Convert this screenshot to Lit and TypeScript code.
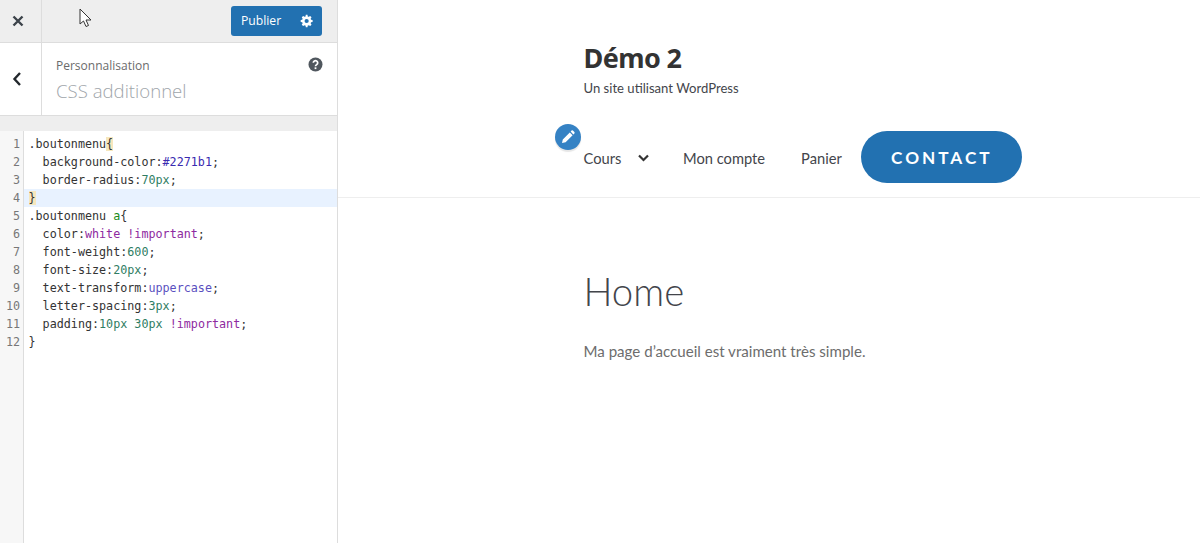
import { LitElement, html, css } from "lit";
import { customElement } from "lit/decorators.js";

const k = (t: string) => html`<span class="kw">${t}</span>`;
const n = (t: string) => html`<span class="num">${t}</span>`;
const h = (t: string) => html`<span class="hex">${t}</span>`;
const v = (t: string) => html`<span class="val">${t}</span>`;
const g = (t: string) => html`<span class="tag">${t}</span>`;
const b = (t: string) => html`<span class="bracket">${t}</span>`;

const LINES = [
  html`.boutonmenu${b("{")}`,
  html`  background-color:${h("#2271b1")};`,
  html`  border-radius:${n("70px")};`,
  html`${b("}")}`,
  html`.boutonmenu ${g("a")}{`,
  html`  color:${k("white")} ${k("!important")};`,
  html`  font-weight:${n("600")};`,
  html`  font-size:${n("20px")};`,
  html`  text-transform:${v("uppercase")};`,
  html`  letter-spacing:${n("3px")};`,
  html`  padding:${n("10px")} ${n("30px")} ${k("!important")};`,
  html`}`,
];

@customElement("app-root")
export class AppRoot extends LitElement {
  static styles = css`
    :host {
      display: flex;
      width: 1200px;
      height: 543px;
      overflow: hidden;
      background: #fff;
      position: relative;
      font-family: "Open Sans", "Noto Sans", sans-serif;
    }
    .side {
      width: 338px;
      flex: none;
      box-sizing: border-box;
      border-right: 1px solid #ddd;
      display: flex;
      flex-direction: column;
      background: #eee;
    }
    .top {
      height: 43px;
      flex: none;
      box-sizing: border-box;
      border-bottom: 1px solid #ddd;
      display: flex;
      align-items: center;
    }
    .close {
      width: 42px;
      height: 42px;
      flex: none;
      box-sizing: border-box;
      border-right: 1px solid #ddd;
      display: flex;
      align-items: center;
      padding-left: 12px;
    }
    .publish {
      margin-left: auto;
      margin-right: 15px;
      margin-top: -1px;
      width: 91px;
      height: 30px;
      background: #2271b1;
      border-radius: 3px;
      display: flex;
      align-items: center;
      color: #fff;
      font-size: 12.2px;
    }
    .publish .label {
      width: 60px;
      text-align: center;
    }
    .publish svg {
      margin-left: 9px;
    }
    .section {
      height: 73px;
      flex: none;
      box-sizing: border-box;
      background: #fff;
      border-bottom: 1px solid #ddd;
      display: flex;
    }
    .back {
      width: 42px;
      flex: none;
      box-sizing: border-box;
      border-right: 1px solid #ddd;
      display: flex;
      align-items: center;
      padding-left: 12px;
    }
    .titles {
      flex: 1;
      padding: 14px 0 0 14px;
      position: relative;
    }
    .crumb {
      font-size: 12px;
      line-height: 18px;
      color: #6b6b6b;
    }
    .title {
      font-size: 18.6px;
      line-height: 26px;
      margin-top: 3px;
      color: #a0a5aa;
      font-weight: 300;
    }
    .help {
      position: absolute;
      top: 14px;
      right: 14px;
    }
    .gap {
      height: 15px;
      flex: none;
    }
    .editor {
      flex: 1;
      background: #fff;
      display: flex;
      font-family: "DejaVu Sans Mono", "Liberation Mono", monospace;
      font-size: 11.72px;
      line-height: 18px;
      padding-top: 0;
    }
    .gutter {
      width: 24px;
      flex: none;
      box-sizing: border-box;
      background: #f7f7f7;
      border-right: 1px solid #ddd;
      padding-top: 4px;
      padding-right: 3px;
      text-align: right;
      color: #777;
    }
    .code {
      flex: 1;
      padding-top: 4px;
      color: #333;
    }
    .line {
      height: 18px;
      padding-left: 4.5px;
      white-space: pre;
    }
    .line.active {
      background: #e8f2ff;
    }
    .num { color: #2f7d63; }
    .hex { color: #3a2bb0; }
    .kw { color: #8e2aa0; }
    .val { color: #5a4fc0; }
    .tag { color: #1a8a1a; }
    .bracket { background: #f6e7bd; }

    .main {
      flex: 1;
      display: flex;
      flex-direction: column;
      font-family: "Lato", "Noto Sans", sans-serif;
    }
    .head {
      height: 198px;
      flex: none;
      box-sizing: border-box;
      border-bottom: 1px solid #eee;
      padding: 41px 0 0 245.5px;
      position: relative;
    }
    .brand {
      font-family: "Noto Sans", sans-serif;
      font-size: 27px;
      line-height: 34px;
      font-weight: 700;
      color: #333;
      letter-spacing: -0.6px;
    }
    .tag-line {
      font-size: 13.1px;
      line-height: 18px;
      margin-top: 4px;
      color: #43454b;
    }
    .nav {
      display: flex;
      align-items: center;
      margin-top: 34px;
      font-size: 14.7px;
      color: #43454b;
    }
    .nav .cours,
    .nav .chev,
    .nav .compte,
    .nav .panier {
      margin-top: 2px;
    }
    .nav .cours {
      width: 38px;
    }
    .nav .chev {
      margin-left: 16px;
      display: flex;
    }
    .nav .compte {
      margin-left: 34.5px;
    }
    .nav .panier {
      margin-left: 36px;
    }
    .cta {
      margin-left: 19.5px;
      width: 161px;
      height: 52px;
      border-radius: 26px;
      background: #2271b1;
      color: #fff;
      display: flex;
      align-items: center;
      justify-content: center;
      font-weight: 700;
      font-size: 17.2px;
      letter-spacing: 3px;
    }
    .edit {
      position: absolute;
      left: 217px;
      top: 124px;
      width: 26px;
      height: 26px;
      border-radius: 50%;
      background: #3582c4;
      box-shadow: 0 2px 1px rgba(0, 0, 0, 0.1);
      display: flex;
      align-items: center;
      justify-content: center;
    }
    .content {
      padding: 68px 0 0 245.5px;
    }
    h1 {
      margin: 0;
      font-size: 38.4px;
      line-height: 50px;
      font-weight: 300;
      color: #43454b;
    }
    p {
      margin: 23px 0 0;
      font-size: 15.1px;
      line-height: 24px;
      color: #6d6d6d;
    }
    .cursor {
      position: absolute;
      left: 79px;
      top: 8px;
    }
  `;

  render() {
    return html`
      <div class="side">
        <div class="top">
          <div class="close">
            <svg width="12" height="12" viewBox="0 0 12 12">
              <path d="M1.5 1.5l9 9M10.5 1.5l-9 9" stroke="#3c434a" stroke-width="2.4" fill="none" />
            </svg>
          </div>
          <div class="publish">
            <span class="label">Publier</span>
            <svg width="14" height="14" viewBox="0 0 20 20">
              <path
                fill="#fff"
                fill-rule="evenodd"
                d="M18 11.4v-2.8l-2.2-.4a6 6 0 0 0-.6-1.5l1.3-1.9-2-2-1.9 1.3a6 6 0 0 0-1.5-.6L10.7 1H8.3l-.4 2.5a6 6 0 0 0-1.5.6L4.5 2.8l-2 2 1.3 1.9a6 6 0 0 0-.6 1.5L1 8.6v2.8l2.2.4c.1.5.3 1 .6 1.5l-1.3 1.9 2 2 1.9-1.3c.5.3 1 .5 1.5.6l.4 2.5h2.4l.4-2.5c.5-.1 1-.3 1.5-.6l1.9 1.3 2-2-1.3-1.9c.3-.5.5-1 .6-1.5zM9.500 13a3 3 0 1 1 0-6 3 3 0 0 1 0 6z"
              />
            </svg>
          </div>
        </div>
        <div class="section">
          <div class="back">
            <svg width="10" height="16" viewBox="0 0 10 16">
              <path d="M8 2L2.5 8 8 14" stroke="#23282d" stroke-width="2.4" fill="none" />
            </svg>
          </div>
          <div class="titles">
            <div class="crumb">Personnalisation</div>
            <div class="title">CSS additionnel</div>
            <svg class="help" width="15" height="15" viewBox="0 0 15 15">
              <circle cx="7.5" cy="7.5" r="7" fill="#50575e" />
              <path d="M5.3 5.8a2.2 2.1 0 1 1 3.4 1.800c-.8.5-1.200.9-1.200 1.700" stroke="#fff" stroke-width="1.7" fill="none" />
              <rect x="6.6" y="10.3" width="1.8" height="1.8" fill="#fff" />
            </svg>
          </div>
        </div>
        <div class="gap"></div>
        <div class="editor">
          <div class="gutter">
            ${LINES.map((_, i) => html`<div>${i + 1}</div>`)}
          </div>
          <div class="code">
            ${LINES.map(
              (l, i) => html`<div class="line ${i === 3 ? "active" : ""}">${l}</div>`
            )}
          </div>
        </div>
      </div>
      <div class="main">
        <div class="head">
          <div class="brand">Démo 2</div>
          <div class="tag-line">Un site utilisant WordPress</div>
          <div class="nav">
            <span class="cours">Cours</span>
            <span class="chev">
              <svg width="11" height="8" viewBox="0 0 11 8">
                <path d="M1 1.5l4.500 4.500 4.500-4.500" stroke="#333" stroke-width="2.2" fill="none" />
              </svg>
            </span>
            <span class="compte">Mon compte</span>
            <span class="panier">Panier</span>
            <span class="cta">CONTACT</span>
          </div>
          <div class="edit">
            <svg width="14" height="14" viewBox="0 0 14 14">
              <path fill="#fff" d="M1 13l.8-3.6 7-7L11.6 5.200l-7 7zM9.600 1.600l1-1a1 1 0 0 1 1.300 0l1.500 1.500a1 1 0 0 1 0 1.300l-1 1z" />
            </svg>
          </div>
        </div>
        <div class="content">
          <h1>Home</h1>
          <p>Ma page d’accueil est vraiment très simple.</p>
        </div>
      </div>
      <svg class="cursor" width="15" height="20" viewBox="0 0 15 20">
        <path d="M1 1v15l3.5-3 2.5 5.5 2.5-1-2.500-5.500H12z" fill="#fff" stroke="#333" stroke-width="1" />
      </svg>
    `;
  }
}
